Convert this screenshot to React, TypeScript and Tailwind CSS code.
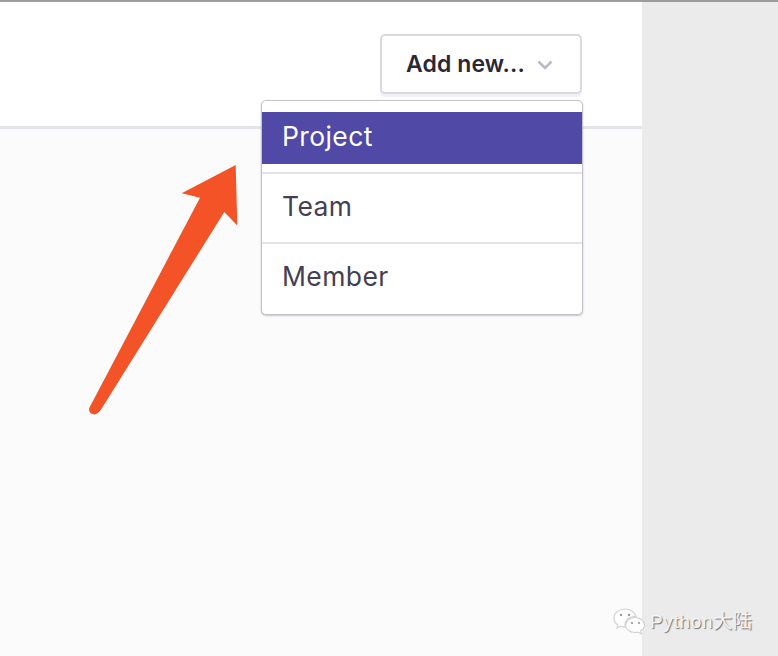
import React from "react";

const items = ["Project", "Team", "Member"];

const App: React.FC = () => {
  return (
    <div className="relative flex h-[656px] w-[778px] flex-col overflow-hidden bg-[#ebebeb] font-['Inter',sans-serif]">
      <div className="h-0.5 flex-none bg-[#9c9c9c]" />
      <div className="flex flex-1">
        {/* Main column */}
        <div className="flex w-[642px] flex-col bg-[#fbfbfb]">
          <div className="flex h-[127px] flex-none justify-end border-b-[3px] border-[#e6e3ea] bg-white pt-8 pr-[60px]">
            <button className="flex h-[60px] w-[202px] items-center gap-[12px] rounded-[5px] border-2 border-[#dcd7e3] bg-white pl-6 text-[23px] font-semibold tracking-[0.1px] text-[#2b2735] shadow-[0_3px_0_#f1f0f3]">
              <span>Add new...</span>
              <svg width="16" height="10" viewBox="0 0 16 10" fill="none" className="mt-0.5">
                <path d="M1.500 1.500 8 8l6.500-6.500" stroke="#bdb8c8" strokeWidth="2.600" />
              </svg>
            </button>
          </div>
        </div>
        {/* Right gutter */}
        <div className="flex-1 bg-[#ebebeb]" />
      </div>

      {/* Dropdown menu */}
      <div className="absolute top-[100px] left-[261px] w-[322px] rounded-[5px] border border-[#c4c2c9] bg-white pt-[11px] text-[26.5px] tracking-[0.4px] text-[#443f52] shadow-[0_1px_2px_rgba(0,0,0,0.22)]">
        {items.map((item, i) => (
          <div key={item} className={i > 0 ? "border-t-2 border-[#e5e3e8]" : ""}>
            <div
              className={
                i === 0
                  ? "flex h-[52px] items-center bg-[#5049a6] pb-[3px] pl-5 text-white"
                  : i === 1
                    ? "flex h-[68px] items-center pb-[3px] pl-5"
                    : "flex h-[70px] items-center pb-[5px] pl-5"
              }
            >
              {item}
            </div>
            {i === 0 && <div className="h-2" />}
          </div>
        ))}
      </div>

      {/* Annotation arrow */}
      <svg className="absolute top-0 left-0" width="778" height="656" viewBox="0 0 778 656" fill="none">
        <path
          d="M235.700 165 L237.300 225.500 L224.300 212 L102 408 Q98 414.500 94 414.500 Q87.500 413 89.500 407.500 L200 197.700 L181.700 193.300 Z"
          fill="#f35326"
        />
      </svg>

      {/* Watermark */}
      <div className="absolute top-[607px] left-[612px] flex items-center gap-1">
        <svg width="34" height="30" viewBox="0 0 34 30" fill="none" stroke="#ffffff" strokeWidth="1.200">
          <path d="M13 2c5.500 0 10 3.200 11 7.600-5.500-.6-11 3-11 8.200 0 .7.100 1.400.3 2-1.700.1-3.300-.1-4.700-.6L5 21l.8-3.200C3.200 16.200 2 13.500 2 11 2 6 6.800 2 13 2Z" fill="#ffffff" stroke="#d2d2d2" />
          <path
            d="M23 10.500c-5.200 0-9.500 3.300-9.500 7.500s4.300 7.500 9.500 7.500c1 0 2-.1 3-.4l3.500 2-.8-3.300c2.300-1.400 3.800-3.500 3.800-5.800 0-4.200-4.300-7.500-9.500-7.500Z"
            fill="#ffffff"
            stroke="#d2d2d2"
          />
          <circle cx="9" cy="8" r="1.200" fill="#9a9a9a" stroke="none" />
          <circle cx="17" cy="8" r="1.200" fill="#9a9a9a" stroke="none" />
          <circle cx="20" cy="16" r="1.100" fill="#9a9a9a" stroke="none" />
          <circle cx="27" cy="16" r="1.100" fill="#9a9a9a" stroke="none" />
        </svg>
        <span className="-mt-[2px] font-['Liberation_Sans','Noto_Sans_CJK_SC',sans-serif] text-[19px] leading-none tracking-[0.7px] text-[#f4f4f4] [text-shadow:1px_1px_1px_#6f6f6f]">
          Python大陆
        </span>
      </div>
    </div>
  );
};

export default App;
